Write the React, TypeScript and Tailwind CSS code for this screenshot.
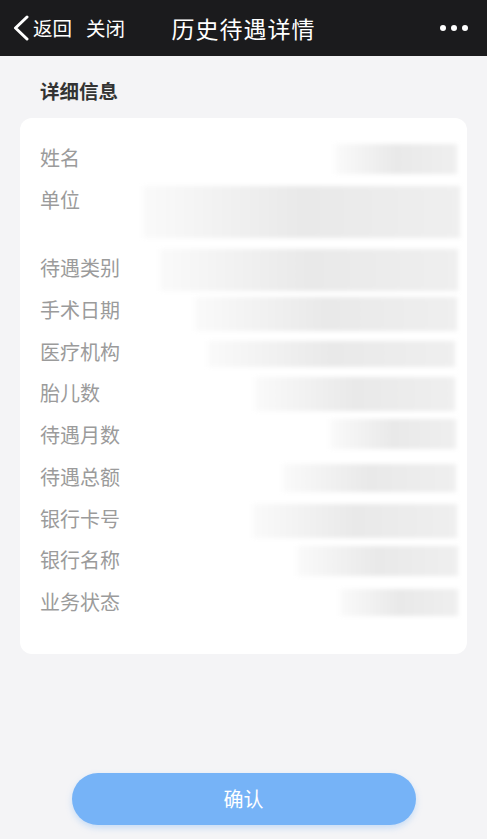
import React from "react";

const rows: { label: string; w: number; h: number; off: number; mr: number; rowH?: number }[] = [
  { label: "姓名", w: 122, h: 30, off: 0, mr: 10 },
  { label: "单位", w: 317, h: 52, off: 0, mr: 7, rowH: 55 },
  { label: "待遇类别", w: 298, h: 42, off: -5, mr: 9 },
  { label: "手术日期", w: 262, h: 34, off: 1, mr: 10 },
  { label: "医疗机构", w: 247, h: 26, off: 3, mr: 12 },
  { label: "胎儿数", w: 200, h: 34, off: -2, mr: 12 },
  { label: "待遇月数", w: 126, h: 30, off: -2, mr: 11 },
  { label: "待遇总额", w: 173, h: 28, off: 1, mr: 11 },
  { label: "银行卡号", w: 204, h: 34, off: -1, mr: 10 },
  { label: "银行名称", w: 161, h: 30, off: 0, mr: 9 },
  { label: "业务状态", w: 118, h: 27, off: 1, mr: 9 },
];

export default function App() {
  return (
    <div
      className="w-[487px] h-[839px] bg-[#f4f4f6] flex flex-col overflow-hidden"
      style={{ fontFamily: '"Noto Sans CJK SC", "Noto Sans", sans-serif' }}
    >
      <div className="h-[56px] bg-[#1b1b1d] grid grid-cols-[1fr_auto_1fr] items-center text-white shrink-0">
        <div className="flex items-center">
          <svg width="17" height="26" viewBox="0 0 17 26" className="ml-[12px]">
            <polyline points="15,2 3.5,13 15,24" fill="none" stroke="white" strokeWidth="3" strokeLinecap="round" strokeLinejoin="round" />
          </svg>
          <span className="ml-[4px] text-[19.5px] leading-[28px]">返回</span>
          <span className="ml-[14px] text-[19.5px] leading-[28px]">关闭</span>
        </div>
        <div className="text-[23px] leading-[30px] tracking-[1px]">历史待遇详情</div>
        <div className="flex justify-end items-center gap-[5px] pr-[19px]">
          <span className="w-[6px] h-[6px] rounded-full bg-white" />
          <span className="w-[6px] h-[6px] rounded-full bg-white" />
          <span className="w-[6px] h-[6px] rounded-full bg-white" />
        </div>
      </div>

      <div className="pl-[40px] pt-[21px] text-[19.5px] leading-[28px] font-bold text-[#333333]">详细信息</div>

      <div className="mx-[20px] mt-[13px] bg-white rounded-[12px] pt-[26px] pb-[38px] pl-[20px] flex flex-col gap-[13.7px]">
        {rows.map((r) => (
          <div key={r.label} className="flex items-start" style={{ height: r.rowH ?? 28 }}>
            <span className="text-[20px] leading-[28px] text-[#9b9b9b] whitespace-nowrap">{r.label}</span>
            <div
              className="ml-auto shrink-0 bg-gradient-to-r from-[#fafafa] via-[#e9e9e9] to-[#efefef] blur-[2px]"
              style={{ width: r.w, height: r.h, marginTop: r.off, marginRight: r.mr }}
            />
          </div>
        ))}
      </div>

      <div className="mt-[119px] mx-auto w-[344px] h-[52px] rounded-full bg-[#76b3f7] shadow-[0_3px_6px_rgba(118,179,247,0.35)] flex items-center justify-center text-white text-[20px]">
        确认
      </div>
    </div>
  );
}
